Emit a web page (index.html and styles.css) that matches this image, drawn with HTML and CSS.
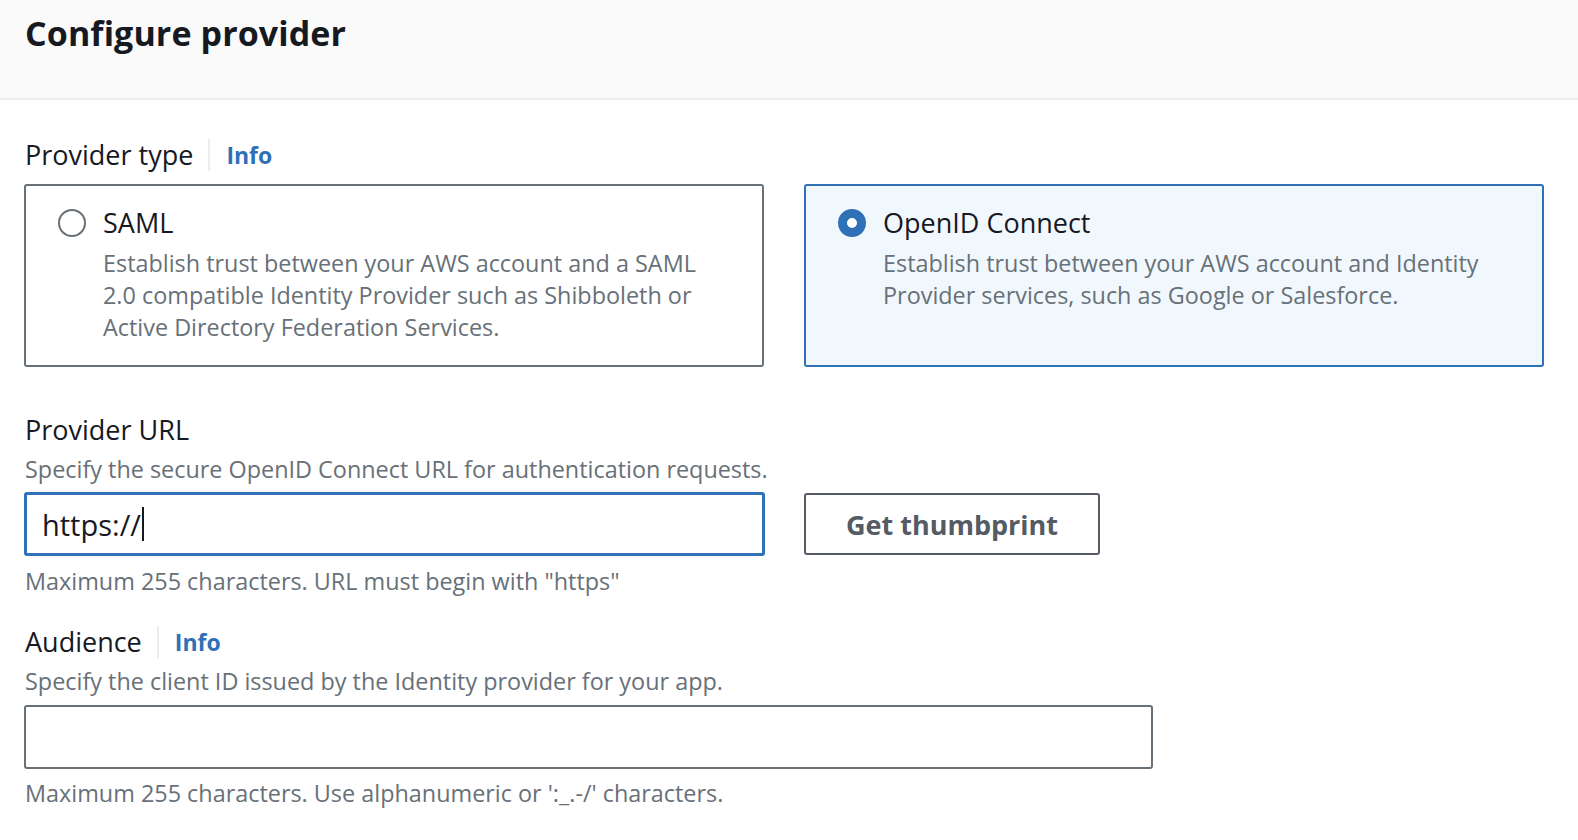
FILE: index.html
```html
<!DOCTYPE html>
<html lang="en">
<head>
<meta charset="utf-8">
<title>Configure provider</title>
<link rel="stylesheet" href="styles.css">
</head>
<body>
<div class="panel">
  <header class="panel-header">
    <h2 class="panel-title">Configure provider</h2>
  </header>
  <div class="panel-body">
    <div class="field field-type">
      <div class="label-row">
        <span class="label">Provider type</span>
        <span class="divider"></span>
        <a class="info" href="#">Info</a>
      </div>
      <div class="tiles">
        <div class="tile">
          <span class="radio"></span>
          <div class="tile-text">
            <div class="tile-title">SAML</div>
            <div class="tile-desc">Establish trust between your AWS account and a SAML 2.0 compatible Identity Provider such as Shibboleth or Active Directory Federation Services.</div>
          </div>
        </div>
        <div class="tile tile-selected">
          <span class="radio radio-checked"></span>
          <div class="tile-text">
            <div class="tile-title">OpenID Connect</div>
            <div class="tile-desc">Establish trust between your AWS account and Identity Provider services, such as Google or Salesforce.</div>
          </div>
        </div>
      </div>
    </div>

    <div class="field field-url">
      <div class="label-row">
        <span class="label">Provider URL</span>
      </div>
      <div class="desc">Specify the secure OpenID Connect URL for authentication requests.</div>
      <div class="input-row">
        <div class="input input-focused input-url" role="textbox">https://<span class="caret"></span></div>
        <button class="button" type="button">Get thumbprint</button>
      </div>
      <div class="constraint">Maximum 255 characters. URL must begin with "https"</div>
    </div>

    <div class="field field-aud">
      <div class="label-row">
        <span class="label">Audience</span>
        <span class="divider"></span>
        <a class="info" href="#">Info</a>
      </div>
      <div class="desc">Specify the client ID issued by the Identity provider for your app.</div>
      <div class="input input-aud" role="textbox"></div>
      <div class="constraint">Maximum 255 characters. Use alphanumeric or ':_.-/' characters.</div>
    </div>
  </div>
</div>
</body>
</html>
```

FILE: styles.css
```css
* { box-sizing: border-box; }

body {
  margin: 0;
  background: #ffffff;
  font-family: "Open Sans", "Noto Sans", sans-serif;
  color: #16191f;
}

.panel-header {
  height: 100px;
  background: #fafafa;
  border-bottom: 2px solid #eaeded;
  padding: 13px 25px 0;
}

.panel-title {
  margin: 0;
  font-size: 34px;
  line-height: 40px;
  font-weight: 700;
  color: #16191f;
  letter-spacing: 0.1px;
}

.panel-body {
  padding: 37px 24px 0;
}

.label-row {
  display: flex;
  align-items: center;
  height: 36px;
  padding-left: 1px;
}

.label {
  font-size: 27px;
  line-height: 36px;
  color: #16191f;
}

.divider {
  width: 2px;
  height: 32px;
  background: #eaeded;
  margin: 0 16px 0 15px;
}

.info {
  font-size: 23px;
  font-weight: 700;
  color: #2f71b7;
  text-decoration: none;
  line-height: 36px;
}

.tiles {
  display: grid;
  grid-template-columns: 740px 740px;
  column-gap: 40px;
  margin-top: 11px;
}

.tile {
  display: flex;
  height: 183px;
  border: 2px solid #687078;
  border-radius: 3px;
  padding: 19px 30px 0 32px;
  gap: 17px;
}

.tile-selected {
  border-color: #2f71b7;
  background: #f1f8fd;
}

.radio {
  flex: none;
  width: 28px;
  height: 28px;
  margin-top: 4px;
  border: 2px solid #687078;
  border-radius: 50%;
  background: #fff;
}

.radio-checked {
  border: 9px solid #2f71b7;
  background: #fff;
}

.tile-title {
  font-size: 27px;
  line-height: 36px;
  color: #16191f;
}

.tile-desc {
  font-size: 23.4px;
  line-height: 32px;
  margin-top: 6px;
  color: #687078;
}

.field-url {
  margin-top: 45px;
}

.desc {
  font-size: 23.4px;
  line-height: 32px;
  margin-top: 5px;
  padding-left: 1px;
  color: #687078;
}

.input-row {
  display: flex;
  align-items: flex-start;
  gap: 39px;
  margin-top: 7px;
}

.input {
  height: 64px;
  border: 2px solid #687078;
  border-radius: 3px;
  background: #fff;
  padding: 0 16px;
  display: flex;
  align-items: center;
  font-size: 29px;
  color: #16191f;
}

.input-focused {
  border: 3px solid #2f71b7;
  padding-left: 15px;
}

.input-url {
  width: 741px;
}

.caret {
  display: inline-block;
  width: 2px;
  height: 34px;
  background: #16191f;
  margin-left: 1px;
}

.button {
  width: 296px;
  height: 62px;
  margin-top: 1px;
  border: 2px solid #545b64;
  border-radius: 3px;
  background: #fff;
  color: #545b64;
  font-family: inherit;
  font-size: 27px;
  font-weight: 700;
  padding: 0;
}

.constraint {
  font-size: 23.4px;
  line-height: 32px;
  margin-top: 9px;
  padding-left: 1px;
  color: #687078;
}

.field-aud {
  margin-top: 27px;
}

.field-aud .desc {
  margin-top: 5px;
}

.input-aud {
  width: 1129px;
  margin-top: 8px;
  height: 64px;
}

.field-aud .constraint {
  margin-top: 8px;
}
```
